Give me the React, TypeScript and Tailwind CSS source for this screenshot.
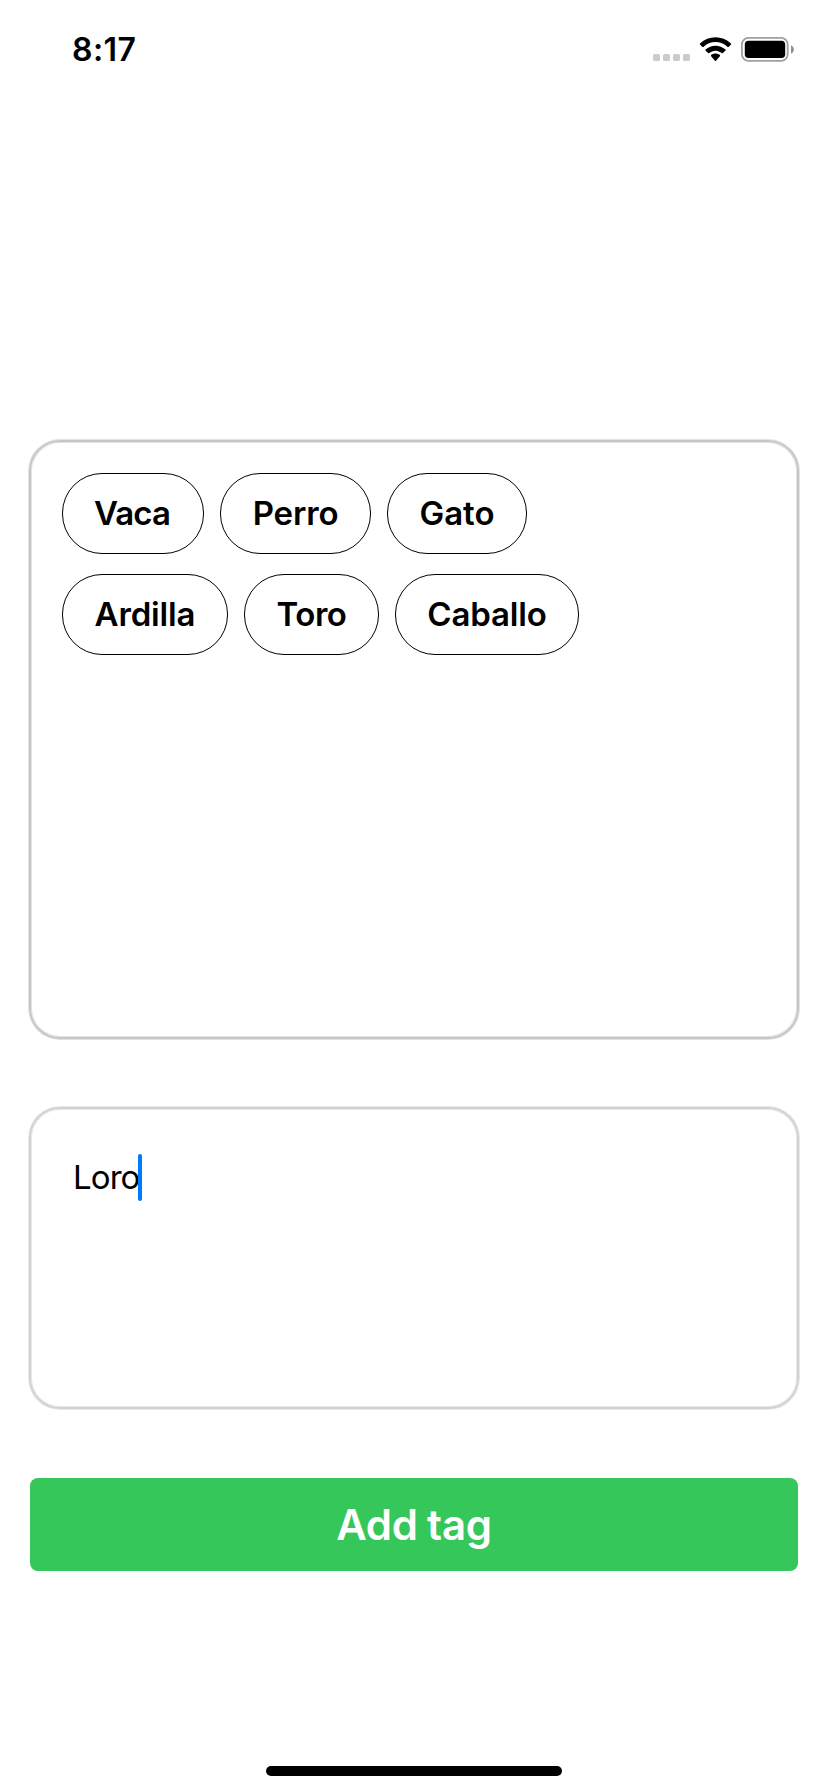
import React from "react";

type Tag = { label: string; pill: string; text: string };

const rows: Tag[][] = [
  [
    { label: "Vaca", pill: "w-[142px] pr-[2px]", text: "tracking-[-0.85px]" },
    { label: "Perro", pill: "w-[151px]", text: "tracking-[-0.15px]" },
    { label: "Gato", pill: "w-[140px]", text: "tracking-[0px]" },
  ],
  [
    { label: "Ardilla", pill: "w-[166px]", text: "tracking-[-0.15px]" },
    { label: "Toro", pill: "w-[135px]", text: "tracking-[-0.5px]" },
    { label: "Caballo", pill: "w-[184px]", text: "tracking-[-0.15px]" },
  ],
];

function StatusBar() {
  return (
    <header className="flex h-[100px] shrink-0 items-start justify-between pl-[72px] pr-[33px]">
      <span className="mt-[30px] text-[32px] leading-[40px] font-semibold tracking-[0.4px]">8:17</span>
      <svg className="mt-[30px] h-[40px] w-[144px]" viewBox="651 30 144 40" fill="none">
        <g fill="#cbcbcb">
          <rect x="653" y="54" width="7" height="7" rx="1.6" />
          <rect x="663" y="54" width="7" height="7" rx="1.6" />
          <rect x="673" y="54" width="7" height="7" rx="1.6" />
          <rect x="683" y="54" width="7" height="7" rx="1.6" />
        </g>
        <g fill="#000">
          <path d="M715.5 42.1c4.5 0 8.9 1.7 12.1 4.8.3.3.7.3 1 0l2.4-2.4c.3-.3.3-.7 0-1-8.7-8.3-22.300-8.300-31 0-.3.3-.3.7 0 1l2.400 2.400c.3.300.700.300 1 0 3.200-3.100 7.600-4.800 12.100-4.800z" />
          <path d="M715.5 50.7c2.400 0 4.600.9 6.300 2.400.3.3.7.3 1 0l2.600-2.400c.3-.3.3-.8 0-1.100-5.600-5.100-14.200-5.100-19.800 0-.3.3-.3.8 0 1.100l2.600 2.400c.3.3.7.3 1 0 1.700-1.500 3.900-2.400 6.300-2.400z" />
          <path d="M719.9 56.200c.3-.3.3-.8 0-1.100-2.500-2-6.300-2-8.800 0-.3.3-.3.8 0 1.100l3.900 4.500c.3.300.7.300 1 0z" />
        </g>
        <rect x="741.9" y="37.900" width="45.800" height="22.900" rx="6.500" stroke="#a0a0a0" strokeWidth="1.800" />
        <rect x="744.800" y="40.800" width="40.400" height="17.200" rx="3.800" fill="#000" />
        <path d="M791 45.500c1.800.6 2.900 2.100 2.900 4s-1.100 3.400-2.900 4z" fill="#909090" />
      </svg>
    </header>
  );
}

export default function App() {
  return (
    <div className="flex h-[1792px] w-[828px] flex-col bg-white font-['Inter','Liberation_Sans',sans-serif] text-black">
      <StatusBar />
      <main className="mt-[340px] flex flex-col px-[29px]">
        <section className="flex h-[599px] flex-col gap-5 rounded-[31px] border-2 border-[#c6c6c7] pt-[31px] pl-[31px] shadow-[0_0_0_1px_#e2e2e2,inset_0_0_0_1px_#e2e2e2]">
          {rows.map((row, i) => (
            <div key={i} className="flex gap-4">
              {row.map((tag) => (
                <div
                  key={tag.label}
                  className={`flex h-[81px] items-center justify-center rounded-[40px] border border-black pb-[2px] ${tag.pill}`}
                >
                  <span className={`text-[33px] leading-[40px] font-semibold whitespace-nowrap ${tag.text}`}>
                    {tag.label}
                  </span>
                </div>
              ))}
            </div>
          ))}
        </section>
        <section className="mt-[68px] flex h-[302px] items-start rounded-[31px] border-2 border-[#d1d1d1] pt-[45px] pl-[42px] shadow-[0_0_0_1px_#e8e8e8,inset_0_0_0_1px_#e8e8e8]">
          <div className="flex w-[69px] items-center justify-between">
            <span className="w-[65px] text-[33px] leading-[45px] tracking-[-0.9px] whitespace-nowrap">Loro</span>
            <span className="h-[47px] w-1 shrink-0 rounded-[2px] bg-[#007aff]" />
          </div>
        </section>
        <button className="mx-px mt-[69px] flex h-[93px] items-center justify-center rounded-[8px] bg-[#35c759] text-[42px] leading-[50px] font-semibold tracking-[-0.25px] [word-spacing:-1px] text-white">
          Add tag
        </button>
      </main>
      <div className="mt-auto mb-4 ml-[266px] h-[10px] w-[296px] rounded-full bg-black" />
    </div>
  );
}
